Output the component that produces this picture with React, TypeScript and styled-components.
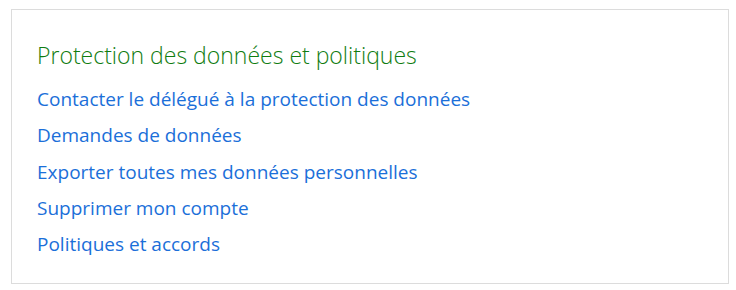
import styled, { createGlobalStyle } from 'styled-components'

const GlobalStyle = createGlobalStyle`
	html, body {
		margin: 0;
		padding: 0;
		background: #ffffff;
	}
	body {
		font-family: "Open Sans", "Noto Sans", sans-serif;
	}
`

const Page = styled.div`
	padding: 9px 8px 6px 11px;
`

const Card = styled.section`
	box-sizing: border-box;
	width: 718px;
	height: 275px;
	border: 1px solid #dcdcdc;
	padding: 31px 25px 0 25px;
`

const Title = styled.h2`
	margin: 0 0 12px 0;
	font-size: 23px;
	font-weight: 300;
	line-height: 28px;
	color: #107c10;
`

const LinkList = styled.ul`
	list-style: none;
	margin: 0;
	padding: 0;
	display: flex;
	flex-direction: column;
`

const LinkItem = styled.li`
	height: 36.3px;
	display: flex;
	align-items: center;
`

const Link = styled.a`
	font-size: 19px;
	color: #1b6fd9;
	text-decoration: none;
	&:hover {
		text-decoration: underline;
	}
`

const links = [
	'Contacter le délégué à la protection des données',
	'Demandes de données',
	'Exporter toutes mes données personnelles',
	'Supprimer mon compte',
	'Politiques et accords',
]

export default function App() {
	return (
		<Page>
			<GlobalStyle />
			<Card>
				<Title>Protection des données et politiques</Title>
				<LinkList>
					{links.map((label) => (
						<LinkItem key={label}>
							<Link href="#">{label}</Link>
						</LinkItem>
					))}
				</LinkList>
			</Card>
		</Page>
	)
}
